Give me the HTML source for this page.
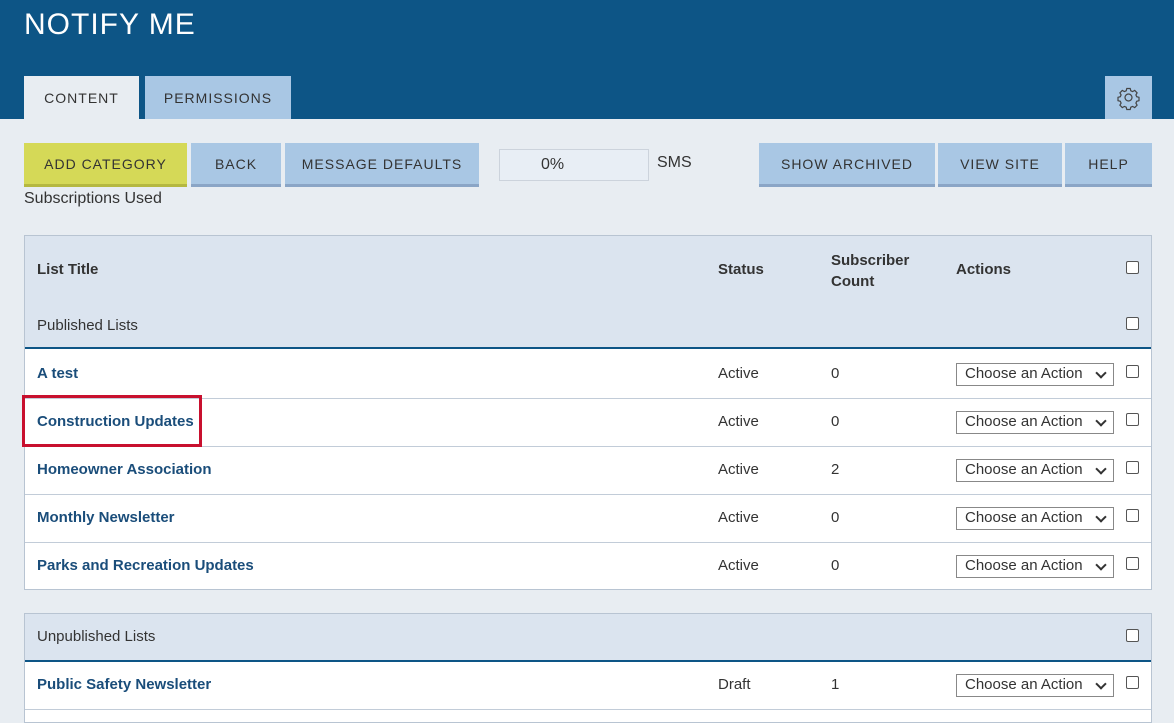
<!DOCTYPE html>
<html><head><style>
*{box-sizing:border-box;margin:0;padding:0}
body{width:1174px;height:718px;overflow:hidden;background:#e8edf2;font-family:"Liberation Sans",sans-serif;position:relative;color:#333}
.a{position:absolute}
.hdr{left:0;top:0;width:1174px;height:119px;background:#0d5586}
.title{left:24px;top:8px;color:#fff;font-size:30px;letter-spacing:1px}
.tab{top:76px;height:43px;font-size:14px;letter-spacing:1px;color:#333;display:flex;align-items:center;justify-content:center}
.btn{top:143px;height:44px;background:#a9c7e4;border-bottom:3px solid #8aa5c6;font-size:14px;letter-spacing:1px;color:#333;display:flex;align-items:center;justify-content:center}
.tbl{background:#fff;border:1px solid #b8c4d2}
.hd{background:#dbe4ef}
.row{position:absolute;left:0;width:1126px;height:48px;border-bottom:1px solid #c2ccd8;font-size:15px}
.row span{position:absolute;top:14px}
.t{left:12px;color:#1a4d7a;font-weight:bold}
.s{left:693px}.c{left:806px}
.sel{position:absolute;left:931px;top:12px;width:158px;height:23px;border:1px solid #888;background:#fff;font-size:15px;padding:1px 8px;color:#333}
.sel:after{content:"";position:absolute;right:8px;top:5px;width:6px;height:6px;border-right:2px solid #333;border-bottom:2px solid #333;transform:rotate(45deg)}
.cb{position:absolute;width:13px;height:13px;border:1px solid #555;border-radius:2px;background:#fff}
</style></head><body>
<div class="a hdr"></div>
<div class="a title">NOTIFY ME</div>
<div class="a tab" style="left:24px;width:115px;background:#e8edf2">CONTENT</div>
<div class="a tab" style="left:145px;width:146px;background:#a9c7e4">PERMISSIONS</div>
<div class="a" style="left:1105px;top:76px;width:47px;height:43px;background:#a9c7e4">
<svg width="47" height="43" viewBox="0 0 47 43"><g fill="none" stroke="#444" stroke-width="1.2"><circle cx="23.5" cy="21.5" r="3.5"/><path d="M21.8 12.5h3.4l.6 2.3 1.8.8 2.1-1.2 2.4 2.4-1.2 2.1.8 1.8 2.3.6v3.4l-2.3.6-.8 1.8 1.2 2.1-2.4 2.4-2.1-1.2-1.8.8-.6 2.3h-3.4l-.6-2.3-1.8-.8-2.1 1.2-2.4-2.4 1.2-2.1-.8-1.8-2.3-.6v-3.4l2.3-.6.8-1.8-1.2-2.1 2.4-2.4 2.1 1.2 1.8-.8z"/></g></svg></div>

<div class="a btn" style="left:24px;width:163px;background:#d5d957;border-bottom-color:#b5b840">ADD CATEGORY</div>
<div class="a btn" style="left:191px;width:90px">BACK</div>
<div class="a btn" style="left:285px;width:194px">MESSAGE DEFAULTS</div>
<div class="a" style="left:499px;top:149px;width:150px;height:32px;border:1px solid #ccd3dc;background:#e8eef5;font-size:16px;padding:6px 0 0 41px">0%</div>
<div class="a" style="left:657px;top:154px;font-size:16px">SMS</div>
<div class="a" style="left:24px;top:190px;font-size:16px">Subscriptions Used</div>
<div class="a btn" style="left:759px;width:176px">SHOW ARCHIVED</div>
<div class="a btn" style="left:938px;width:124px">VIEW SITE</div>
<div class="a btn" style="left:1065px;width:87px">HELP</div>

<div class="a tbl" style="left:24px;top:235px;width:1128px;height:355px">
 <div class="a hd" style="left:0;top:0;width:1126px;height:113px;border-bottom:2px solid #0d5586"></div>
 <div class="a" style="left:12px;top:25px;font-size:15px;font-weight:bold">List Title</div>
 <div class="a" style="left:693px;top:25px;font-size:15px;font-weight:bold">Status</div>
 <div class="a" style="left:806px;top:14px;font-size:15px;font-weight:bold;line-height:21px">Subscriber<br>Count</div>
 <div class="a" style="left:931px;top:25px;font-size:15px;font-weight:bold">Actions</div>
 <div class="cb" style="left:1101px;top:25px"></div>
 <div class="a" style="left:12px;top:81px;font-size:15px">Published Lists</div>
 <div class="cb" style="left:1101px;top:81px"></div>
 <div class="row" style="top:115px"><span class="t">A test</span><span class="s">Active</span><span class="c">0</span><div class="sel">Choose an Action</div><div class="cb" style="left:1101px;top:14px"></div></div>
 <div class="row" style="top:163px"><span class="t">Construction Updates</span><span class="s">Active</span><span class="c">0</span><div class="sel">Choose an Action</div><div class="cb" style="left:1101px;top:14px"></div></div>
 <div class="row" style="top:211px"><span class="t">Homeowner Association</span><span class="s">Active</span><span class="c">2</span><div class="sel">Choose an Action</div><div class="cb" style="left:1101px;top:14px"></div></div>
 <div class="row" style="top:259px"><span class="t">Monthly Newsletter</span><span class="s">Active</span><span class="c">0</span><div class="sel">Choose an Action</div><div class="cb" style="left:1101px;top:14px"></div></div>
 <div class="row" style="top:307px;border-bottom:none"><span class="t">Parks and Recreation Updates</span><span class="s">Active</span><span class="c">0</span><div class="sel">Choose an Action</div><div class="cb" style="left:1101px;top:14px"></div></div>
</div>

<div class="a tbl" style="left:24px;top:613px;width:1128px;height:110px">
 <div class="a hd" style="left:0;top:0;width:1126px;height:48px;border-bottom:2px solid #0d5586"></div>
 <div class="a" style="left:12px;top:14px;font-size:15px">Unpublished Lists</div>
 <div class="cb" style="left:1101px;top:15px"></div>
 <div class="row" style="top:48px"><span class="t">Public Safety Newsletter</span><span class="s">Draft</span><span class="c">1</span><div class="sel">Choose an Action</div><div class="cb" style="left:1101px;top:14px"></div></div>
</div>

<div class="a" style="left:22px;top:395px;width:180px;height:52px;border:3px solid #c8102e"></div>
</body></html>
